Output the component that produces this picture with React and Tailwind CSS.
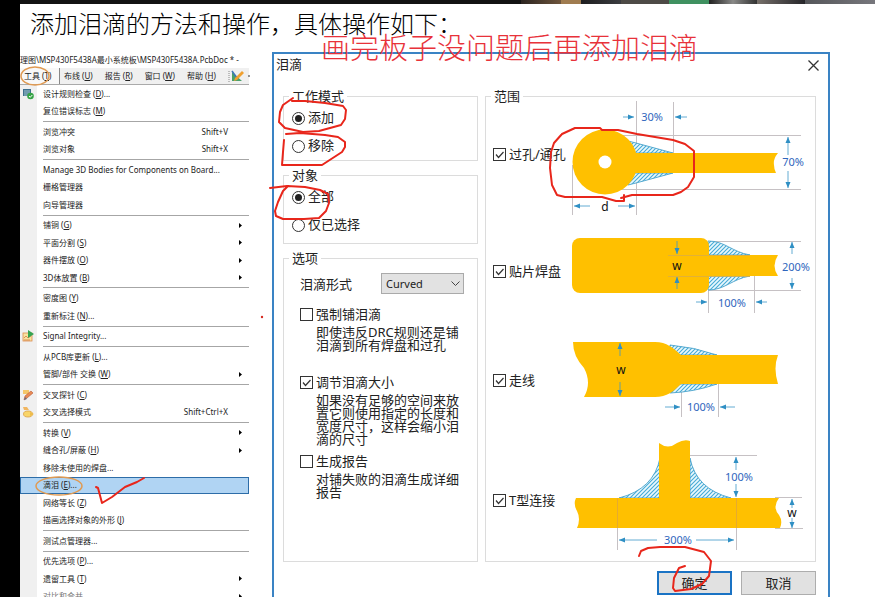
import React from "react";

const MENU = [
  { label: "设计规则检查", k: "D", tail: "...", icon: "drc" },
  { label: "复位错误标志", k: "M" },
  null,
  { label: "浏览冲突", shortcut: "Shift+V" },
  { label: "浏览对象", shortcut: "Shift+X" },
  null,
  { label: "Manage 3D Bodies for Components on Board..." },
  { label: "栅格管理器" },
  { label: "向导管理器" },
  null,
  { label: "铺铜", k: "G", sub: true },
  { label: "平面分割", k: "S", sub: true },
  { label: "器件摆放", k: "O", sub: true },
  { label: "3D体放置", k: "B", sub: true },
  null,
  { label: "密度图", k: "Y" },
  { label: "重新标注", k: "N", tail: "..." },
  null,
  { label: "Signal Integrity...", icon: "signal" },
  null,
  { label: "从PCB库更新", k: "L", tail: "..." },
  { label: "管脚/部件 交换", k: "W", sub: true },
  null,
  { label: "交叉探针", k: "C", icon: "probe" },
  { label: "交叉选择模式", shortcut: "Shift+Ctrl+X", icon: "cross" },
  null,
  { label: "转换", k: "V", sub: true },
  { label: "缝合孔/屏蔽", k: "H", sub: true },
  { label: "移除未使用的焊盘..." },
  { label: "滴泪", k: "E", tail: "...", active: true },
  { label: "网络等长", k: "Z" },
  { label: "描画选择对象的外形", k: "J" },
  null,
  { label: "测试点管理器..." },
  null,
  { label: "优先选项", k: "P", tail: "..." },
  { label: "遗留工具", k: "T", sub: true },
  { label: "对比和合并...", sub: true, dim: true },
];

const BAR = [
  ["布线", "U"],
  ["报告", "R"],
  ["窗口", "W"],
  ["帮助", "H"],
];

function Mnemonic({ k }) {
  return (
    <>
      {" ("}
      <u className="underline-offset-1">{k}</u>
      {")"}
    </>
  );
}

function MenuIcon({ name }) {
  if (name === "drc")
    return (
      <svg className="size-3" viewBox="0 0 12 12" aria-hidden="true">
        <rect x="1" y="1" width="8" height="7" fill="#3f6f8c" />
        <path d="M2 3h6M2 5h6M2 7h4" stroke="#bfe0e4" strokeWidth=".8" />
        <circle cx="8.5" cy="8" r="3.3" fill="#35a345" />
        <path d="M7 8l1.2 1.3L10.3 7" stroke="#fff" fill="none" />
      </svg>
    );
  if (name === "signal")
    return (
      <svg className="size-3" viewBox="0 0 12 12" aria-hidden="true">
        <rect x="1" y="3" width="9" height="8" fill="#f8e3a0" stroke="#dc8d50" strokeWidth=".8" />
        <path d="M2 8l2-2 2 2 3-2M2 10h6" stroke="#d37a45" strokeWidth=".8" fill="none" />
        <path d="M6 0l6 4-6 4z" fill="#35a352" />
      </svg>
    );
  if (name === "probe")
    return (
      <svg className="size-3" viewBox="0 0 12 12" aria-hidden="true">
        <path d="M1 1h6v4H1z" fill="#f4c76a" />
        <path d="M2 11l1-4 6-5 2 2-6 5z" fill="#e88b55" stroke="#b85b38" strokeWidth=".6" />
        <path d="M2 11l1-3 2 2z" fill="#6b6f80" />
      </svg>
    );
  return (
    <svg className="size-3" viewBox="0 0 12 12" aria-hidden="true">
      <path d="M1 1h4l2 3H2z" fill="#f1b660" />
      <ellipse cx="6" cy="8" rx="4.5" ry="3" fill="#f9d568" stroke="#dba044" strokeWidth=".8" />
      <path d="M8 6l4 2-4 2z" fill="#eebc4b" />
    </svg>
  );
}

function MenuRow({ item }) {
  return (
    <button
      type="button"
      className={
        "flex min-h-0 w-full flex-5 items-center border text-left leading-none whitespace-nowrap " +
        (item.active ? "border-[#2d6da8] bg-[#b0d4f3] " : "border-transparent ") +
        (item.dim ? "text-[#777]" : "text-[#222]")
      }
    >
      <span className="flex w-[22px] shrink-0 pl-px">{item.icon && <MenuIcon name={item.icon} />}</span>
      <span className="flex-1">
        {item.label}
        {item.k && <Mnemonic k={item.k} />}
        {item.tail}
      </span>
      {item.shortcut && <span className="pr-5">{item.shortcut}</span>}
      {item.sub && (
        <svg className="mr-1.5 h-[5px] w-[3px]" viewBox="0 0 3 5" aria-hidden="true">
          <path d="M0 0l3 2.5L0 5z" fill="#000" />
        </svg>
      )}
    </button>
  );
}

function AppWindow() {
  return (
    <section className="flex w-[229px] shrink-0 flex-col text-[8px] text-[#222]">
      <div className="h-4 overflow-hidden leading-4 whitespace-nowrap">
        理图\MSP430F5438A最小系统板\MSP430F5438A.PcbDoc * -
      </div>
      <nav className="flex h-[17px] items-center gap-3 border-b border-[#aaa] bg-[#f0f0f0] leading-none whitespace-nowrap">
        <button type="button" className="-mr-2 h-full w-10 shrink-0 border-r border-[#888] bg-[#f8f8f8] pl-1 text-left">
          工具
          <Mnemonic k="T" />
        </button>
        {BAR.map(([t, k]) => (
          <button type="button" key={t}>
            {t}
            <Mnemonic k={k} />
          </button>
        ))}
        <svg className="h-3 w-[22px] shrink-0" viewBox="0 0 22 12" aria-hidden="true">
          <path d="M1 1v11" stroke="#888" strokeDasharray="1 1" />
          <path d="M4 2v9h10z" fill="#4aa06b" />
          <path d="M4 1l5 7" stroke="#3f74b8" strokeWidth="1.5" />
          <path d="M7 8l7-7 2 2-7 7-3 1z" fill="#f0a030" />
          <path d="M20 6h2" stroke="#333" />
        </svg>
      </nav>
      <div className="-mb-2 flex min-h-0 flex-1 flex-col bg-linear-to-r from-[#f0f0f0] from-[17px] to-white to-[17px]">
        {MENU.map((item, i) =>
          item ? (
            <MenuRow key={i} item={item} />
          ) : (
            <div key={i} className="flex min-h-0 flex-1 items-center pl-[23px]">
              <hr className="w-full border-[#a6a6a6]" />
            </div>
          )
        )}
      </div>
    </section>
  );
}

function Group({ title, className, children }) {
  return (
    <fieldset className={"min-w-0 border border-[#dcdcdc] " + className}>
      <legend className="ml-[5px] px-[3px] leading-4">{title}</legend>
      {children}
    </fieldset>
  );
}

function Radio({ name, label, checked }) {
  return (
    <label className="flex h-7 items-center gap-[3px] pl-2">
      <span className="relative flex size-[13px]">
        <input
          type="radio"
          name={name}
          defaultChecked={checked}
          className="peer size-[13px] appearance-none rounded-full border border-[#333] bg-white"
        />
        <span className="pointer-events-none absolute inset-[3px] hidden rounded-full bg-[#222] peer-checked:block" />
      </span>
      {label}
    </label>
  );
}

function Check({ label, checked }) {
  return (
    <label className="flex h-4 items-center gap-[3px] leading-4 whitespace-nowrap">
      <span className="relative flex size-[13px] shrink-0">
        <input
          type="checkbox"
          defaultChecked={checked}
          className="peer size-[13px] appearance-none border border-[#333] bg-white"
        />
        <svg
          className="pointer-events-none absolute inset-0 hidden size-[13px] peer-checked:block"
          viewBox="0 0 13 13"
          aria-hidden="true"
        >
          <path d="M3 6.5l2.5 3L10.5 4" fill="none" stroke="#333" strokeWidth="1.2" />
        </svg>
      </span>
      {label}
    </label>
  );
}

const GOLD = "#ffc000";
const BLUE = "#3d97c8";

function Arrow({ from, to }) {
  return (
    <line x1={from[0]} y1={from[1]} x2={to[0]} y2={to[1]} stroke={BLUE} strokeWidth=".8" markerEnd="url(#head)" />
  );
}

function Guides({ d }) {
  return <path d={d} stroke="#c6c1c4" fill="none" />;
}

function Hatch({ d }) {
  return <path d={d} fill="url(#hatch)" stroke="#4aa3cc" strokeWidth=".9" />;
}

function Dim({ x, y, children }) {
  return (
    <text x={x} y={y} textAnchor="middle" fontSize="11" fill="#2f66bd">
      {children}
    </text>
  );
}

function Mark({ x, y, children }) {
  return (
    <text x={x} y={y} textAnchor="middle" fontSize="12" fill="#111">
      {children}
    </text>
  );
}

function Defs() {
  return (
    <defs>
      <marker id="head" viewBox="0 0 6 6" refX="6" refY="3" markerWidth="6" markerHeight="6" markerUnits="userSpaceOnUse" orient="auto">
        <path d="M0 .5L6 3 0 5.5z" fill="#2f8fc4" />
      </marker>
      <pattern id="hatch" width="4" height="4" patternUnits="userSpaceOnUse">
        <rect width="4" height="4" fill="#eaf8fd" />
        <path d="M-1 1l2-2M0 4l4-4M3 5l2-2" stroke="#45abd6" strokeWidth="1.1" />
      </pattern>
    </defs>
  );
}

function ViaDrawing() {
  return (
    <svg className="h-[100px] w-[242px] overflow-visible" viewBox="570 104 242 100" aria-hidden="true">
      <Defs />
      <Guides d="M636.5 101V215M673.5 102V153M620 135.5H801M620 189.5H801M572.5 165V215" />
      <Hatch d="M628 141L636 143 673 153H628z" />
      <Hatch d="M628 185L636 183 673 173H628z" />
      <circle cx="605" cy="162" r="32.5" fill={GOLD} />
      <path d="M605 153H778Q773 159 774 165 774 169 776 173H605z" fill={GOLD} />
      <circle cx="605" cy="162" r="6.5" fill="#fff" />
      <Arrow from={[623, 117]} to={[634, 117]} />
      <Arrow from={[687, 117]} to={[675, 117]} />
      <Arrow from={[788, 155]} to={[788, 137]} />
      <Arrow from={[788, 171]} to={[788, 188]} />
      <Arrow from={[590, 206]} to={[574, 206]} />
      <Arrow from={[618, 206]} to={[635, 206]} />
      <Dim x={652} y={121}>30%</Dim>
      <Dim x={793} y={166}>70%</Dim>
      <Mark x={605} y={211}>d</Mark>
    </svg>
  );
}

function PadDrawing() {
  return (
    <svg className="h-[84px] w-[242px] overflow-visible" viewBox="570 229 242 84" aria-hidden="true">
      <Guides d="M709 241.5H801M709 290.5H801M708.5 276V313M754.5 276V313" />
      <Hatch d="M708 241C725 241 732 252 750 255H708z" />
      <Hatch d="M708 290C725 290 732 279 750 276H708z" />
      <rect x="572" y="238" width="137" height="55" rx="8" fill={GOLD} />
      <path d="M700 255H778Q771 266 778 276H700z" fill={GOLD} />
      <path d="M668 255.5H750M668 276.5H750" stroke="#d9ad45" strokeWidth=".8" />
      <Arrow from={[677, 241]} to={[677, 254]} />
      <Arrow from={[677, 289]} to={[677, 277]} />
      <Arrow from={[792, 254]} to={[792, 242]} />
      <Arrow from={[792, 278]} to={[792, 289]} />
      <Arrow from={[696, 302]} to={[707, 302]} />
      <Arrow from={[767, 302]} to={[756, 302]} />
      <Mark x={677} y={270}>w</Mark>
      <Dim x={796} y={271}>200%</Dim>
      <Dim x={732} y={307}>100%</Dim>
    </svg>
  );
}

function TrackDrawing() {
  return (
    <svg className="h-[84px] w-[242px] overflow-visible" viewBox="570 338 242 84" aria-hidden="true">
      <Guides d="M681.5 384V417M718.5 384V417" />
      <Hatch d="M670 345Q694 347 717 355H670z" />
      <Hatch d="M670 393Q694 392 717 384H670z" />
      <path
        d="M573 342H655C667 342 673 348 681 355H778Q773 368 778 384H681C674 391 667 397 655 397H584Q592 383 584 368 573 356 573 342z"
        fill={GOLD}
      />
      <Arrow from={[620, 356]} to={[620, 343]} />
      <Arrow from={[620, 382]} to={[620, 396]} />
      <Arrow from={[665, 407]} to={[680, 407]} />
      <Arrow from={[735, 407]} to={[720, 407]} />
      <Mark x={621} y={374}>w</Mark>
      <Dim x={701} y={411}>100%</Dim>
    </svg>
  );
}

function TeeDrawing() {
  return (
    <svg className="h-[106px] w-[242px] overflow-visible" viewBox="570 447 242 106" aria-hidden="true">
      <Guides d="M690 455.5H757M775 497.5H802M775 528.5H803M617.5 498V550M736.5 498V550" />
      <Hatch d="M660 458Q654 489 619 498H660z" />
      <Hatch d="M690 458Q696 489 731 498H690z" />
      <path
        d="M659 443Q668 450 677 443 684 439 690 441V498H779Q772 507 779 515 783 521 780 528H577Q581 519 577 511 573 504 576 498H659z"
        fill={GOLD}
      />
      <path d="M617.5 498V528M736.5 498V528" stroke="#e0a63a" strokeWidth=".8" />
      <Arrow from={[736, 470]} to={[736, 457]} />
      <Arrow from={[736, 484]} to={[736, 497]} />
      <Arrow from={[792, 508]} to={[792, 499]} />
      <Arrow from={[792, 518]} to={[792, 528]} />
      <Arrow from={[657, 540]} to={[619, 540]} />
      <Arrow from={[696, 540]} to={[734, 540]} />
      <Dim x={739} y={481}>100%</Dim>
      <Dim x={678} y={544}>300%</Dim>
      <Mark x={792} y={517}>w</Mark>
    </svg>
  );
}

function ScopeRow({ label, children }) {
  return (
    <div className="grid grid-cols-[77px_1fr] items-center">
      <Check label={label} checked />
      {children}
    </div>
  );
}

function TeardropDialog() {
  return (
    <section className="mr-[45px] ml-[23px] flex min-w-0 flex-1 flex-col border-2 border-b-0 border-[#3a83c4] pr-3 pl-[9px] text-[13px] text-[#222]">
      <header className="-ml-[7px] mb-3 flex h-[22px] items-center justify-between">
        <h2>泪滴</h2>
        <button type="button" aria-label="关闭" className="-mr-3 flex w-[30px] justify-center">
          <svg className="size-[11px]" viewBox="0 0 11 11" aria-hidden="true">
            <path d="M.5.5l10 10M10.5.5l-10 10" stroke="#333" strokeWidth="1.3" />
          </svg>
        </button>
      </header>
      <div className="flex gap-[7px]">
        <div className="flex w-[195px] shrink-0 flex-col gap-1.5">
          <Group title="工作模式" className="">
            <Radio name="mode" label="添加" checked />
            <Radio name="mode" label="移除" />
          </Group>
          <Group title="对象" className="pb-1">
            <Radio name="object" label="全部" checked />
            <Radio name="object" label="仅已选择" />
          </Group>
          <Group title="选项" className="flex-1">
            <div className="pt-[7px] pl-4">
              <div className="flex items-center">
                <label htmlFor="shape" className="w-[81px] leading-4">
                  泪滴形式
                </label>
                <span className="relative flex w-[83px]">
                  <select
                    id="shape"
                    className="h-[21px] w-full appearance-none border border-[#aaa] bg-[#e2e2e2] pl-1 text-[11px] leading-4"
                  >
                    <option>Curved</option>
                  </select>
                  <svg
                    className="pointer-events-none absolute top-2 right-1 h-[6px] w-[9px]"
                    viewBox="0 0 9 6"
                    aria-hidden="true"
                  >
                    <path d="M.5.5l4 4 4-4" fill="none" stroke="#444" />
                  </svg>
                </span>
              </div>
              <div className="mt-3">
                <Check label="强制铺泪滴" />
                <p className="mt-1 ml-4 w-[150px] leading-[13px]">即使违反DRC规则还是铺泪滴到所有焊盘和过孔</p>
              </div>
              <div className="mt-[22px]">
                <Check label="调节泪滴大小" checked />
                <p className="mt-1 ml-4 w-[150px] leading-[13px]">
                  如果没有足够的空间来放置它则使用指定的长度和宽度尺寸，这样会缩小泪滴的尺寸
                </p>
              </div>
              <div className="mt-[7px]">
                <Check label="生成报告" />
                <p className="mt-1 ml-4 w-[150px] leading-[13px]">对铺失败的泪滴生成详细报告</p>
              </div>
            </div>
          </Group>
        </div>
        <Group title="范围" className="flex-1">
          <div className="flex flex-col gap-[25px] pb-2 pl-[7px]">
            <ScopeRow label="过孔/通孔">
              <ViaDrawing />
            </ScopeRow>
            <ScopeRow label="贴片焊盘">
              <PadDrawing />
            </ScopeRow>
            <ScopeRow label="走线">
              <TrackDrawing />
            </ScopeRow>
            <ScopeRow label="T型连接">
              <TeeDrawing />
            </ScopeRow>
          </div>
        </Group>
      </div>
      <footer className="mt-[9px] flex justify-end gap-[9px]">
        <button type="button" className="h-6 w-[75px] border-2 border-[#1a73c4] bg-[#e1e1e1] leading-5">
          确定
        </button>
        <button type="button" className="h-6 w-[75px] border border-[#adadad] bg-[#e1e1e1] leading-5">
          取消
        </button>
      </footer>
    </section>
  );
}

function Annotations() {
  return (
    <svg
      className="pointer-events-none absolute top-0 left-0 h-[597px] w-[875px]"
      viewBox="0 0 875 597"
      fill="none"
      strokeLinecap="round"
      strokeLinejoin="round"
      aria-hidden="true"
    >
      <g stroke="#e8261b" strokeWidth="2">
        <path d="M293 98L283 105 280 112 279 122 285 128 303 132 319 131 341 125 345 119 346 110 343 106 325 103 305 101 292 101" />
        <path d="M286 134L300 133 325 135 338 137 345 142 345 147 342 152 322 165 282 165 283 152 284 140" />
        <path d="M270 188L287 186 305 187 320 190 328 194 329 203 326 211 319 218 304 219 283 219 276 216 275 211 278 202 283 191 288 186" />
        <path d="M562 134L575 128 600 128 602 130 618 130 637 134 673 140 685 144 694 151 694 177 688 187 681 192 673 195 632 195 621 198M624 195V201H616L602 197H565L557 195 552 185 550 168 551 152 554 143 562 134" />
        <path d="M639 556L641 551 648 548 660 547 685 547 704 552 711 561 709 576 702 584 691 589 675 591 673 588 674 578 679 568 685 566" />
        <path d="M96 487L98 488 102 503 112 497 125 487 137 482 144 478" />
      </g>
      <circle cx="262" cy="317" r="1.2" fill="#d62b20" />
      <g stroke="#e09a52" strokeWidth="1.5">
        <ellipse cx="35" cy="76" rx="14" ry="9" />
        <ellipse cx="59" cy="486" rx="23" ry="9" />
      </g>
    </svg>
  );
}

function PhotoStrip() {
  return (
    <div className="flex h-1 shrink-0">
      <div className="flex-1 bg-[#121212]" />
      <div className="w-10 bg-linear-to-r from-[#2c2420] to-[#6e553c]" />
      <div className="w-5 bg-[#a07c50]" />
      <div className="w-10 bg-linear-to-r from-[#1d1d1f] to-[#3b3c40]" />
      <div className="w-12 bg-[#4d4a46]" />
      <div className="w-10 bg-[#3f9160]" />
      <div className="w-12 bg-linear-to-r from-[#222] via-[#8a8a88] to-[#333]" />
      <div className="w-12 bg-linear-to-r from-[#77706a] to-[#26262a]" />
      <div className="w-[70px] bg-linear-to-r from-[#55565a] to-[#77777c]" />
    </div>
  );
}

export default function App() {
  return (
    <div
      className="relative flex h-screen overflow-hidden bg-black"
      style={{ fontFamily: '"Noto Sans", "Noto Sans CJK SC", sans-serif' }}
    >
      <div className="flex min-w-0 flex-1 flex-col pl-5">
        <PhotoStrip />
        <div className="flex min-h-0 flex-1 flex-col bg-white">
          <h1 className="h-12 shrink-0 pl-2.5 text-2xl leading-10 font-light whitespace-nowrap text-black">
            添加泪滴的方法和操作，具体操作如下：
          </h1>
          <div className="flex min-h-0 flex-1">
            <AppWindow />
            <TeardropDialog />
          </div>
        </div>
      </div>
      <p className="absolute top-[30px] left-[321px] text-[29px] leading-9 font-light whitespace-nowrap text-[#e8323a]">
        画完板子没问题后再添加泪滴
      </p>
      <Annotations />
    </div>
  );
}
